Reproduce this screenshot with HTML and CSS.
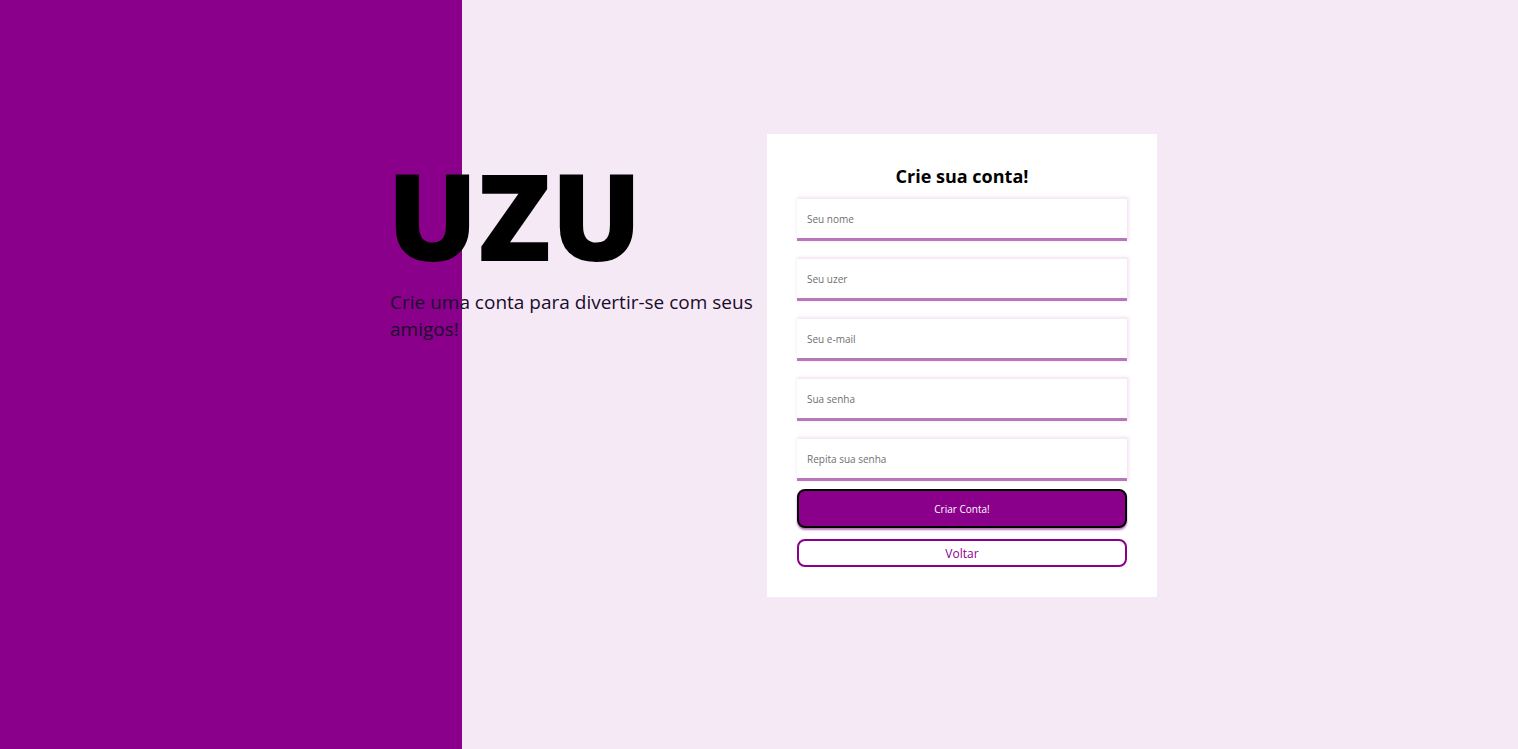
FILE: index.html
```html
<!DOCTYPE html>
<html lang="pt-BR">
<head>
<meta charset="utf-8">
<title>UZU - Crie sua conta</title>
<link rel="stylesheet" href="styles.css">
</head>
<body>
<main class="page">
  <section class="intro">
    <h1 class="logo">UZU</h1>
    <p class="tagline">Crie uma conta para divertir-se com seus amigos!</p>
  </section>
  <section class="card">
    <h2 class="card-title">Crie sua conta!</h2>
    <form class="form">
      <input class="field" type="text" placeholder="Seu nome">
      <input class="field" type="text" placeholder="Seu uzer">
      <input class="field" type="email" placeholder="Seu e-mail">
      <input class="field" type="password" placeholder="Sua senha">
      <input class="field" type="password" placeholder="Repita sua senha">
      <button class="btn-primary" type="button">Criar Conta!</button>
      <button class="btn-secondary" type="button">Voltar</button>
    </form>
  </section>
</main>
</body>
</html>
```

FILE: styles.css
```css
* { box-sizing: border-box; }
html, body { margin: 0; height: 100%; }
body {
  font-family: "Open Sans", "Noto Sans", sans-serif;
  background: linear-gradient(to right, #8b008b 0, #8b008b 462px, #f5e9f5 462px, #f5e9f5 100%);
  overflow: hidden;
}
.page {
  display: flex;
  align-items: flex-start;
  padding: 134px 0 0 390px;
}
.intro {
  width: 377px;
  padding-top: 31px;
}
.logo {
  margin: 0 0 0 -3px;
  font-size: 120px;
  font-weight: 800;
  line-height: 100px;
  color: #000;
  letter-spacing: 0;
}
.tagline {
  margin: 24px 0 0;
  font-size: 19px;
  line-height: 27px;
  color: #1a0b2b;
}
.card {
  width: 390px;
  background: #fff;
  padding: 30px 30px 30px;
}
.card-title {
  margin: 0 0 10px;
  text-align: center;
  font-size: 18px;
  font-weight: 700;
  color: #000;
  line-height: 25px;
}
.form {
  display: flex;
  flex-direction: column;
}
.field {
  height: 42px;
  margin-bottom: 18px;
  border: none;
  border-bottom: 3px solid #b877b8;
  background: #fff;
  box-shadow: 1px -1px 3px 1px #f3e4f3;
  padding: 0 10px;
  font-family: inherit;
  font-size: 10px;
  color: #333;
  outline: none;
}
.field::placeholder { color: #6f6f6f; }
.field:nth-of-type(5) { margin-bottom: 8px; }
.btn-primary {
  height: 39px;
  border: 2px solid #000;
  border-radius: 8px;
  background: #8b008b;
  color: #fff;
  font-family: inherit;
  font-size: 10px;
  box-shadow: 0 2px 2px #b877b8;
}
.btn-secondary {
  margin-top: 11px;
  height: 28px;
  border: 2px solid #8b008b;
  border-radius: 8px;
  background: #fff;
  color: #8b008b;
  font-family: inherit;
  font-size: 12px;
}
```
